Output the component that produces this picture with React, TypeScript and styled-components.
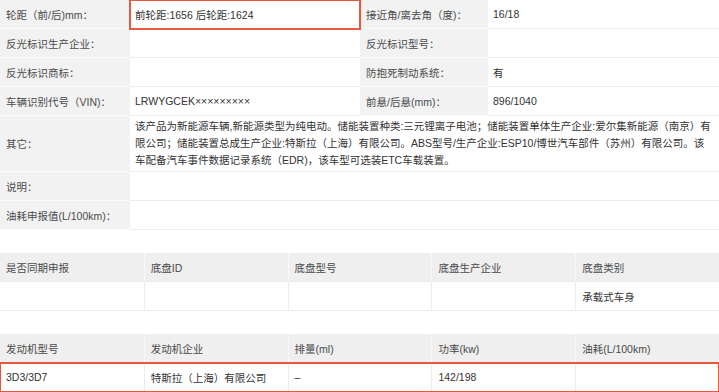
import { Fragment } from 'react'
import styled, { createGlobalStyle, css } from 'styled-components'

const GlobalStyle = createGlobalStyle`
  html, body {
    margin: 0;
    padding: 0;
    background: #ffffff;
  }
  body {
    font-family: 'Liberation Sans', 'Noto Sans CJK SC', sans-serif;
    font-size: 10.5px;
    color: #3a3a3a;
  }
`

const red = '#e9573f'

const highlight = css`
  outline: 2px solid ${red};
  outline-offset: -1px;
  position: relative;
  z-index: 1;
`

const Page = styled.div`
  width: 719px;
  display: flex;
  flex-direction: column;
  gap: 23px;
`

const InfoGrid = styled.div`
  display: grid;
  grid-template-columns: 130px 230px 128px 1fr;
`

const LabelCell = styled.div`
  background: #f2f2f2;
  color: #4a4a4a;
  border-bottom: 1px solid #fafafa;
  padding: 0 6px;
  min-height: 28px;
  display: flex;
  align-items: center;
  white-space: nowrap;
`

const ValueCell = styled.div<{ $span?: number; $marked?: boolean }>`
  grid-column: span ${({ $span }) => $span ?? 1};
  background: #ffffff;
  color: #333333;
  border-bottom: 1px solid #ececec;
  padding: 0 5px;
  min-height: 28px;
  display: flex;
  align-items: center;
  ${({ $marked }) => $marked && highlight}
`

const Paragraph = styled.div`
  line-height: 17px;
  padding: 2px 0;
`

const Table = styled.div`
  display: flex;
  flex-direction: column;
`

const TableRow = styled.div<{ $head?: boolean; $marked?: boolean }>`
  display: grid;
  grid-template-columns: repeat(5, 1fr);
  min-height: 28px;
  background: ${({ $head }) => ($head ? '#efefef' : '#ffffff')};
  color: ${({ $head }) => ($head ? '#4a4a4a' : '#333333')};
  border-bottom: 1px solid #ececec;
  ${({ $marked }) => $marked && highlight}
`

const TableCell = styled.div<{ $head?: boolean }>`
  display: flex;
  align-items: center;
  padding: 0 6px;
  white-space: nowrap;
  border-left: 1px solid ${({ $head }) => ($head ? '#f8f8f8' : '#ececec')};
  &:first-child {
    border-left: none;
  }
`

type Pair = [string, string, string, string]

const pairs: Pair[] = [
  ['轮距（前/后)mm：', '前轮距:1656 后轮距:1624', '接近角/离去角（度)：', '16/18'],
  ['反光标识生产企业：', '', '反光标识型号：', ''],
  ['反光标识商标：', '', '防抱死制动系统：', '有'],
  ['车辆识别代号（VIN)：', 'LRWYGCEK×××××××××', '前悬/后悬(mm)：', '896/1040'],
]

const otherText =
  '该产品为新能源车辆,新能源类型为纯电动。储能装置种类:三元锂离子电池；储能装置单体生产企业:爱尔集新能源（南京）有限公司；储能装置总成生产企业:特斯拉（上海）有限公司。ABS型号/生产企业:ESP10/博世汽车部件（苏州）有限公司。该车配备汽车事件数据记录系统（EDR)，该车型可选装ETC车载装置。'

const chassisHead = ['是否同期申报', '底盘ID', '底盘型号', '底盘生产企业', '底盘类别']
const chassisRow = ['', '', '', '', '承载式车身']
const engineHead = ['发动机型号', '发动机企业', '排量(ml)', '功率(kw)', '油耗(L/100km)']
const engineRow = ['3D3/3D7', '特斯拉（上海）有限公司', '–', '142/198', '']

const DataTable = ({ head, row, marked }: { head: string[]; row: string[]; marked?: boolean }) => (
  <Table>
    <TableRow $head>
      {head.map((h) => (
        <TableCell key={h} $head>
          {h}
        </TableCell>
      ))}
    </TableRow>
    <TableRow $marked={marked}>
      {row.map((v, i) => (
        <TableCell key={i}>{v}</TableCell>
      ))}
    </TableRow>
  </Table>
)

export default function App() {
  return (
    <>
      <GlobalStyle />
      <Page>
        <InfoGrid>
          {pairs.map(([l1, v1, l2, v2], i) => (
            <Fragment key={l1}>
              <LabelCell>{l1}</LabelCell>
              <ValueCell $marked={i === 0}>{v1}</ValueCell>
              <LabelCell>{l2}</LabelCell>
              <ValueCell>{v2}</ValueCell>
            </Fragment>
          ))}
          <LabelCell>其它：</LabelCell>
          <ValueCell $span={3}>
            <Paragraph>{otherText}</Paragraph>
          </ValueCell>
          <LabelCell>说明：</LabelCell>
          <ValueCell $span={3} />
          <LabelCell>油耗申报值(L/100km)：</LabelCell>
          <ValueCell $span={3} />
        </InfoGrid>
        <DataTable head={chassisHead} row={chassisRow} />
        <DataTable head={engineHead} row={engineRow} marked />
      </Page>
    </>
  )
}
